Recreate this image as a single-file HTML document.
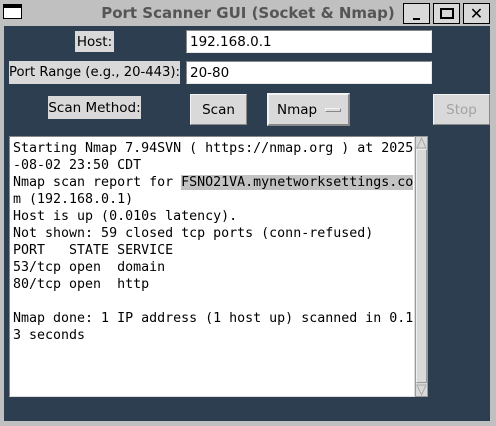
<!DOCTYPE html>
<html><head><style>
body{margin:0;width:496px;height:426px;background:#c0c0c0;position:relative;overflow:hidden;font-family:"DejaVu Sans","Liberation Sans",sans-serif;font-size:13.5px}
.a{position:absolute;box-sizing:border-box}
.lbl{background:#d9d9d9;color:#000;display:flex;align-items:center;justify-content:center;white-space:nowrap}
.ent{background:#fff;border:1px solid #888;border-right-color:#e8e8e8;border-bottom-color:#e8e8e8;padding-left:3px;display:flex;align-items:center;color:#000;font-size:13.5px}
.btn{background:#d9d9d9;border:1px solid #f4f4f4;border-right-color:#888;border-bottom-color:#888;display:flex;align-items:center;justify-content:center;font-size:13.5px}
pre{margin:0;font-family:"DejaVu Sans Mono",monospace;font-size:13.3px;line-height:17px;color:#000}
</style></head><body>
<div class="a" style="left:3px;top:4px;width:19px;height:15px;border:1.5px solid #000;border-top-width:4px;background:#fff"></div>
<div class="a" style="left:0;top:4px;width:496px;text-align:center;font-weight:bold;color:#555;font-size:15px">Port Scanner GUI (Socket &amp; Nmap)</div>
<div class="a" style="left:403px;top:3px;width:27px;height:21px;border:1px solid #000;background:#d9d9d9"><div class="a" style="left:9px;top:14px;width:7px;height:2px;background:#000"></div></div>
<div class="a" style="left:433px;top:3px;width:27px;height:21px;border:1px solid #000;background:#d9d9d9"><div class="a" style="left:6px;top:4px;width:14px;height:11px;border:2px solid #000"></div></div>
<div class="a" style="left:463px;top:3px;width:27px;height:21px;border:1px solid #000;background:#d9d9d9;font-weight:bold;font-size:16px;text-align:center;line-height:19px">✕</div>
<div class="a" style="left:4px;top:26px;width:486px;height:395px;background:#2d3e50"></div>
<div class="a lbl" style="left:75px;top:31px;width:39px;height:21px">Host:</div>
<div class="a ent" style="left:186px;top:30px;width:246px;height:23px">192.168.0.1</div>
<div class="a lbl" style="left:9px;top:61px;width:171px;height:23px;font-size:13.2px">Port Range (e.g., 20-443):</div>
<div class="a ent" style="left:186px;top:61px;width:246px;height:23px">20-80</div>
<div class="a lbl" style="left:48px;top:96px;width:93px;height:23px">Scan Method:</div>
<div class="a btn" style="left:190px;top:94px;width:57px;height:31px">Scan</div>
<div class="a btn" style="left:267px;top:93px;width:83px;height:33px;border-width:2px;justify-content:flex-start;padding-left:8px">Nmap<div class="a" style="left:56px;top:13px;width:16px;height:4px;border:1px solid #f4f4f4;border-right-color:#888;border-bottom-color:#888"></div></div>
<div class="a btn" style="left:433px;top:94px;width:57px;height:31px;color:#a3a3a3">Stop</div>
<div class="a" style="left:9px;top:136px;width:406px;height:261px;background:#fff;border:1px solid #888;border-right-color:#ddd;border-bottom-color:#ddd;padding:3px 0 0 3px"><pre>Starting Nmap 7.94SVN ( https://nmap.org ) at 2025
-08-02 23:50 CDT
Nmap scan report for <span style="background:#c3c3c3">FSNO21VA.mynetworksettings.co</span>
m (192.168.0.1)
Host is up (0.010s latency).
Not shown: 59 closed tcp ports (conn-refused)
PORT   STATE SERVICE
53/tcp open  domain
80/tcp open  http

Nmap done: 1 IP address (1 host up) scanned in 0.1
3 seconds</pre></div>
<div class="a" style="left:415px;top:136px;width:13px;height:261px;background:#d9d9d9;border:1px solid #999"></div>
<div class="a" style="left:416px;top:149px;width:11px;height:234px;border:1px solid #eee;border-right-color:#999;border-bottom-color:#999"></div>
<svg class="a" style="left:416px;top:137px" width="11" height="12"><path d="M5.5 1L1 11H10Z" fill="none" stroke="#aaa"/></svg>
<svg class="a" style="left:416px;top:384px" width="11" height="12"><path d="M5.5 11L1 1H10Z" fill="none" stroke="#aaa"/></svg>
</body></html>
